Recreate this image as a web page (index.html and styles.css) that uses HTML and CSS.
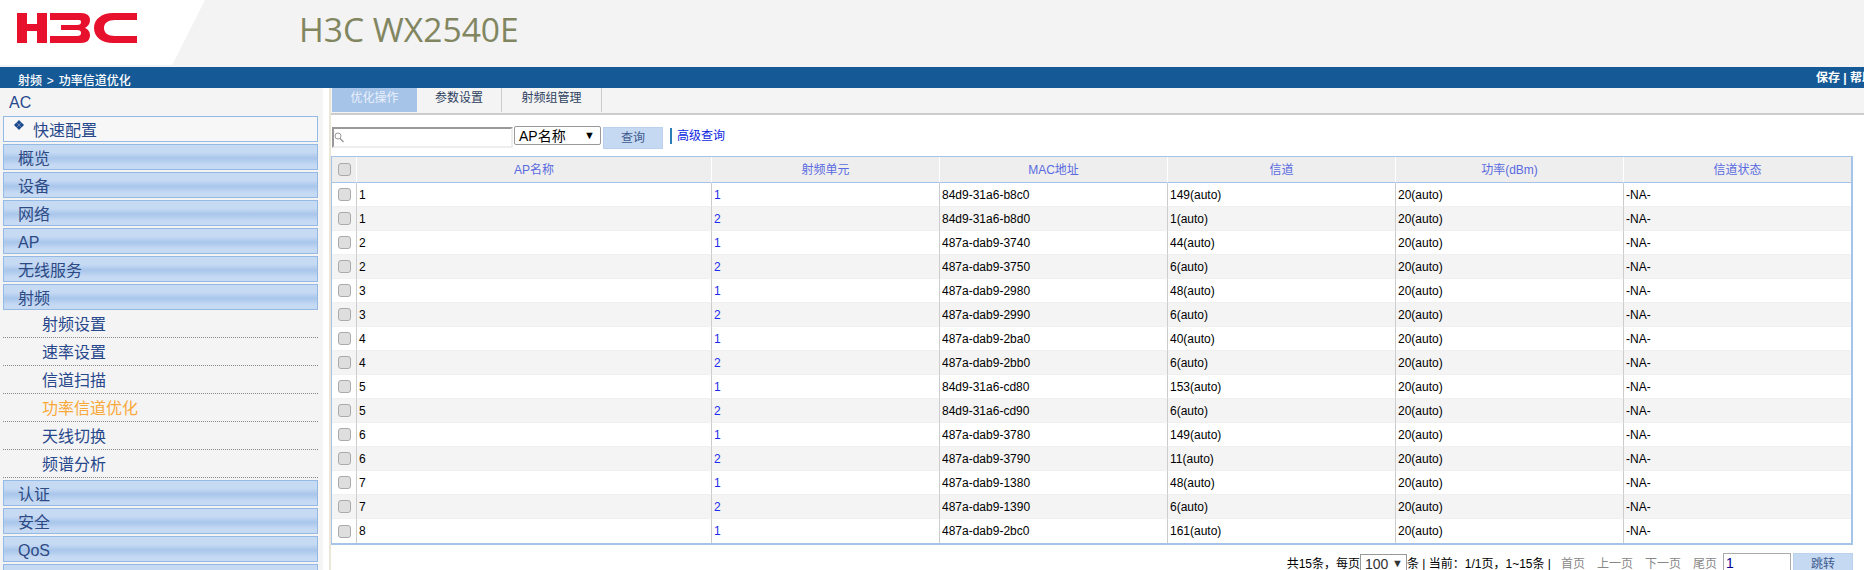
FILE: index.html
```html
<!DOCTYPE html>
<html lang="zh-CN">
<head>
<meta charset="utf-8">
<title>H3C WX2540E</title>
<link rel="stylesheet" href="styles.css">
</head>
<body>
<header class="top">
  <div class="brand">
    <svg class="logo" width="120" height="30" viewBox="0 0 120 30" aria-label="H3C">
      <path fill="#e8112d" d="M0 0h10v11h10V0h10v30H20V18H10v12H0z"/>
      <path fill="#e8112d" d="M33 0h31c6 0 9 3 9 7 0 4-2 6-5 8 3 1 5 4 5 7 0 5-3 8-9 8H33v-7h27c3 0 4-1 4-3s-1-3-4-3H44v-5h16c3 0 4-1 4-3s-1-2-4-2H33z"/>
      <path fill="#e8112d" d="M120 0v7H98c-7 0-11 3-11 8s4 8 11 8h22v7H96C85 30 77 24 77 15S85 0 96 0z"/>
    </svg>
  </div>
  <h1 class="title">H3C WX2540E</h1>
</header>
<nav class="bar">
  <span class="crumb">射频 &gt; 功率信道优化</span>
  <span class="tools">保存 | 帮助</span>
</nav>
<div class="main">
  <aside class="side">
    <div class="ac">AC</div>
    <div class="item quick">
      <svg class="diamonds" width="10" height="10" viewBox="0 0 10 10"><path fill="#1c4a8e" d="M5 0l2.4 2.4L5 4.8 2.6 2.4zM2.4 2.6l2.4 2.4-2.4 2.4L0 5zM7.6 2.6L10 5 7.6 7.4 5.2 5zM5 5.2l2.4 2.4L5 10 2.6 7.6z"/></svg>
      快速配置
    </div>
    <div class="item">概览</div>
    <div class="item">设备</div>
    <div class="item">网络</div>
    <div class="item">AP</div>
    <div class="item">无线服务</div>
    <div class="item">射频</div>
    <ul class="subs">
      <li>射频设置</li>
      <li>速率设置</li>
      <li>信道扫描</li>
      <li class="active">功率信道优化</li>
      <li>天线切换</li>
      <li>频谱分析</li>
    </ul>
    <div class="item">认证</div>
    <div class="item">安全</div>
    <div class="item">QoS</div>
    <div class="item"></div>
  </aside>
  <main class="content">
    <div class="tabs">
      <span class="tab on">优化操作</span>
      <span class="tab">参数设置</span>
      <span class="tab wide">射频组管理</span>
    </div>
    <div class="search">
      <span class="field">
        <svg class="glass" width="10" height="11" viewBox="0 0 10 11"><circle cx="4" cy="4" r="3" fill="none" stroke="#999" stroke-width="1"/><path d="M6 6.5l3.5 3.5" stroke="#999" stroke-width="1.4"/></svg>
        <input class="q" type="text">
      </span>
      <span class="pick name">AP名称<i>▼</i></span>
      <button class="btn" type="button">查询</button>
      <a class="adv">高级查询</a>
    </div>
    <table class="grid">
      <colgroup><col class="c0"><col class="c1"><col class="c2"><col class="c3"><col class="c4"><col class="c5"><col></colgroup>
      <thead>
        <tr><th><span class="cb"></span></th><th>AP名称</th><th>射频单元</th><th>MAC地址</th><th>信道</th><th>功率(dBm)</th><th>信道状态</th></tr>
      </thead>
      <tbody>
        <tr><td><span class="cb"></span></td><td>1</td><td class="u">1</td><td>84d9-31a6-b8c0</td><td>149(auto)</td><td>20(auto)</td><td>-NA-</td></tr>
        <tr><td><span class="cb"></span></td><td>1</td><td class="u">2</td><td>84d9-31a6-b8d0</td><td>1(auto)</td><td>20(auto)</td><td>-NA-</td></tr>
        <tr><td><span class="cb"></span></td><td>2</td><td class="u">1</td><td>487a-dab9-3740</td><td>44(auto)</td><td>20(auto)</td><td>-NA-</td></tr>
        <tr><td><span class="cb"></span></td><td>2</td><td class="u">2</td><td>487a-dab9-3750</td><td>6(auto)</td><td>20(auto)</td><td>-NA-</td></tr>
        <tr><td><span class="cb"></span></td><td>3</td><td class="u">1</td><td>487a-dab9-2980</td><td>48(auto)</td><td>20(auto)</td><td>-NA-</td></tr>
        <tr><td><span class="cb"></span></td><td>3</td><td class="u">2</td><td>487a-dab9-2990</td><td>6(auto)</td><td>20(auto)</td><td>-NA-</td></tr>
        <tr><td><span class="cb"></span></td><td>4</td><td class="u">1</td><td>487a-dab9-2ba0</td><td>40(auto)</td><td>20(auto)</td><td>-NA-</td></tr>
        <tr><td><span class="cb"></span></td><td>4</td><td class="u">2</td><td>487a-dab9-2bb0</td><td>6(auto)</td><td>20(auto)</td><td>-NA-</td></tr>
        <tr><td><span class="cb"></span></td><td>5</td><td class="u">1</td><td>84d9-31a6-cd80</td><td>153(auto)</td><td>20(auto)</td><td>-NA-</td></tr>
        <tr><td><span class="cb"></span></td><td>5</td><td class="u">2</td><td>84d9-31a6-cd90</td><td>6(auto)</td><td>20(auto)</td><td>-NA-</td></tr>
        <tr><td><span class="cb"></span></td><td>6</td><td class="u">1</td><td>487a-dab9-3780</td><td>149(auto)</td><td>20(auto)</td><td>-NA-</td></tr>
        <tr><td><span class="cb"></span></td><td>6</td><td class="u">2</td><td>487a-dab9-3790</td><td>11(auto)</td><td>20(auto)</td><td>-NA-</td></tr>
        <tr><td><span class="cb"></span></td><td>7</td><td class="u">1</td><td>487a-dab9-1380</td><td>48(auto)</td><td>20(auto)</td><td>-NA-</td></tr>
        <tr><td><span class="cb"></span></td><td>7</td><td class="u">2</td><td>487a-dab9-1390</td><td>6(auto)</td><td>20(auto)</td><td>-NA-</td></tr>
        <tr><td><span class="cb"></span></td><td>8</td><td class="u">1</td><td>487a-dab9-2bc0</td><td>161(auto)</td><td>20(auto)</td><td>-NA-</td></tr>
      </tbody>
    </table>
    <div class="pager">
      <span>共15条，每页</span>
      <span class="pick size">100<i>▼</i></span>
      <span>条 | 当前：1/1页，1~15条 |</span>
      <a class="off first">首页</a>
      <a class="off">上一页</a>
      <a class="off">下一页</a>
      <a class="off">尾页</a>
      <input class="jump" type="text" value="1">
      <button class="btn go" type="button">跳转</button>
    </div>
  </main>
</div>
</body>
</html>
```
FILE: styles.css
```css
* { box-sizing: border-box; }
html, body { margin: 0; height: 570px; overflow: hidden; background: #fff; }
body { font: 12px/1.2 "Liberation Sans", "Noto Sans CJK SC", sans-serif; color: #000; }

.top { height: 67px; display: flex; align-items: flex-start; background: #f3f3f3; position: relative; }
.brand { width: 205px; height: 65px; background: #fff; clip-path: polygon(0 0, 100% 0, 84% 100%, 0 100%); flex: none; padding: 13px 0 0 17px; }
.logo { display: block; }
.title { margin: 7px 0 0 94px; font: 400 33.6px/44px "Open Sans", sans-serif; color: #828660; }

.bar { height: 21px; background: #155a96; color: #fff; font-weight: 700; display: flex; justify-content: space-between; white-space: nowrap; overflow: hidden; }
.crumb { padding: 8px 0 0 18px; line-height: 13px; font-size: 12px; font-weight: 500; word-spacing: 1.5px; }
.tools { padding: 5px 0 0; line-height: 13px; width: 48px; overflow: hidden; flex: none; }

.main { display: flex; height: 482px; }
.side { width: 323px; flex: none; background: #f4f4f4; padding: 0 5px 0 3px; color: #27488c; font-size: 16px; }
.ac { height: 28px; padding: 6px 0 0 6px; line-height: 18px; color: #27488c; }
.item { height: 26px; margin-bottom: 2px; border: 1px solid #93b9e4; padding: 3px 0 0 14px; line-height: 22px;
  background: linear-gradient(#c7daf4 0, #c7daf4 30%, #a9c6ea 55%, #c7daf4 85%, #c7daf4 100%); color: #2d4a85; white-space: nowrap; }
.quick { background: #f7f7f7; padding-left: 29px; position: relative; color: #27488c; }
.diamonds { position: absolute; left: 10px; top: 3px; }
.subs { list-style: none; margin: 0 0 2px; padding: 0; }
.subs li { height: 28px; border-bottom: 1px dotted #888; padding: 5px 0 0 39px; line-height: 20px; color: #27488c; }
.subs li:first-child { height: 26px; padding-top: 3px; }
.subs li.active { color: #f9a93a; }

.content { flex: 1; margin-left: 6px; border-left: 2px solid #ece6d8; min-width: 0; }
.tabs { height: 27px; background: #f4f4f4; border-bottom: 2px solid #ccc; display: flex; padding-left: 1px; }
.tab { width: 85px; height: 24px; border-right: 1px solid #ccc; text-align: center; line-height: 21px; color: #2d4160; font-size: 12px; }
.tab.on { background: #a6c3e8; color: #eaf1fb; border-right: 0; }
.tab.wide { width: 100px; }

.search { display: flex; height: 41px; padding: 11px 0 0 1px; align-items: flex-start; }
.field { position: relative; display: block; margin-top: 1px; }
.glass { position: absolute; left: 2px; top: 5px; }
.q { display: block; width: 181px; height: 21px; margin: 0; padding: 0; background: #fff; border-style: solid; border-width: 2px; border-color: #999 #eee #eee #999; }
.pick { display: flex; justify-content: space-between; border: 1px solid #999; background: #fff; color: #000; }
.pick i { font-style: normal; font-size: 11px; line-height: 14px; }
.name { width: 87px; height: 19px; margin-left: 1px; padding: 1px 5px 0 4px; font-size: 14px; line-height: 17px; border-radius: 2px; }
.btn { height: 22px; margin: 0; padding: 0; border: 1px solid #b9d0ee; background: #c6d9f3; color: #3c5a8c; font: inherit; }
.search .btn { width: 60px; margin: 1px 0 0 2px; }
.adv { margin: 2px 0 0 7px; padding-left: 5px; border-left: 2px solid #2c7cb8; color: #0b1ee0; line-height: 16px; font-size: 12px; height: 16px; }

.grid { width: 1522px; table-layout: fixed; border-collapse: separate; border-spacing: 0; border: 1px solid #a6c3e8; border-right-width: 2px; border-bottom-width: 2px; }
.c0 { width: 25px; }
.c1 { width: 355px; }
.c2, .c3, .c4, .c5 { width: 228px; }
.grid th { height: 26px; background: #eee; border-right: 1px solid #fff; border-bottom: 1px solid #a6c3e8; font-weight: 400; color: #5a6be0; font-size: 12px; padding: 2px 0 0; }
.grid th:first-child { padding-top: 0; }
.grid th:last-child, .grid td:last-child { border-right: 0; }
.grid td { height: 24px; padding: 1px 0 0 2px; border-right: 1px solid #ccc; border-bottom: 1px solid #f0f0f0; white-space: nowrap; font-size: 12px; }
.grid tbody tr:nth-child(even) td { background: #f4f4f4; }
.grid tbody tr:last-child td { border-bottom: 0; }
.grid td:first-child { padding: 0; text-align: center; }
.grid td.u { color: #1a2cf0; }
.cb { display: block; width: 13px; height: 13px; margin: 0 auto; border: 1px solid #aaa; border-radius: 3px; background: #dedede; }

.pager { display: flex; justify-content: flex-end; align-items: flex-start; padding: 8px 11px 0 0; line-height: 14px; white-space: nowrap; }
.pager > span:not(.pick) { padding-top: 4px; }
.size { width: 47px; height: 22px; margin: 1px 0 0; padding: 1px 3px 0 4px; font-size: 14px; line-height: 16px; color: #333; }
.off { color: #888; margin-left: 12px; padding-top: 4px; }
.off.first { margin-left: 10px; }
.jump { width: 68px; height: 24px; margin: 0 0 0 6px; padding: 0 0 5px 2px; border: 1px solid #aaa; font: 14px "Liberation Sans", sans-serif; color: #000090; }
.btn.go { width: 60px; height: 24px; margin-left: 2px; padding-bottom: 3px; }
```
